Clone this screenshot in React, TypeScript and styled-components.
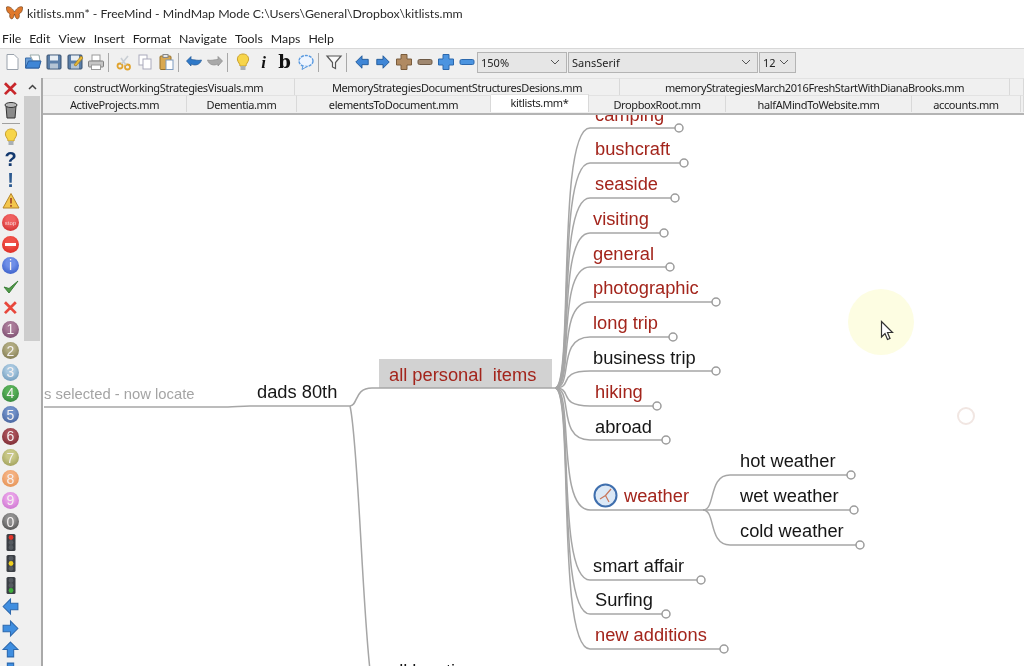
import React from "react";
import styled, { createGlobalStyle } from "styled-components";

const GlobalStyle = createGlobalStyle`
  html, body { margin: 0; padding: 0; background: #fff; }
  body { font-family: "Noto Sans", "Liberation Sans", sans-serif; }
`;

const Page = styled.div`
  width: 1024px;
  height: 666px;
  overflow: hidden;
  display: flex;
  flex-direction: column;
  background: #fff;
  filter: blur(0.4px);
`;

const TitleBar = styled.div`
  height: 26px;
  display: flex;
  align-items: center;
  gap: 4px;
  padding-left: 6px;
  font-family: Lato, "Noto Sans", sans-serif;
  font-size: 12.3px;
  color: #2a2a2a;
`;

const MenuBar = styled.div`
  height: 20px;
  margin-top: 2px;
  display: flex;
  align-items: center;
  gap: 8px;
  padding-left: 2px;
  font-family: Lato, "Noto Sans", sans-serif;
  font-size: 12.3px;
  color: #222;
`;

const ToolBar = styled.div`
  height: 30px;
  display: flex;
  align-items: center;
  padding: 0 0 3px 1px;
  box-sizing: border-box;
  background: #f0f0f0;
  border-top: 1px solid #d8d8d8;
`;

const ToolButton = styled.div`
  width: 21px;
  height: 20px;
  flex: none;
  display: flex;
  align-items: center;
  justify-content: center;
`;

const ToolSep = styled.div`
  width: 1px;
  height: 19px;
  flex: none;
  margin: 0 4px 0 2px;
  background: #a8a8a8;
`;

const Combo = styled.div<{ $w: number }>`
  width: ${(p) => p.$w}px;
  height: 21px;
  flex: none;
  box-sizing: border-box;
  margin-right: 1px;
  padding: 0 6px 0 3px;
  display: flex;
  align-items: center;
  justify-content: space-between;
  background: #e6e6e6;
  border: 1px solid #b4b4b4;
  font-size: 11px;
  color: #222;
`;

const Body = styled.div`
  flex: 1;
  min-height: 0;
  overflow: hidden;
  display: flex;
  background: #f0f0f0;
`;

const IconColumn = styled.div`
  width: 21px;
  flex: none;
  display: flex;
  flex-direction: column;
  align-items: center;
`;

const IconCell = styled.div`
  height: 21.35px;
  flex: none;
  display: flex;
  align-items: center;
  justify-content: center;
`;

const IconRule = styled.div`
  width: 18px;
  height: 1px;
  flex: none;
  margin: 2px 0 3px;
  background: #a0a0a0;
`;

const ScrollTrack = styled.div`
  width: 16px;
  flex: none;
  margin-left: 3px;
  display: flex;
  flex-direction: column;
`;

const ScrollArrow = styled.div`
  height: 18px;
  display: flex;
  align-items: center;
  justify-content: center;
  background: #f0f0f0;
`;

const ScrollThumb = styled.div`
  height: 245px;
  background: #cdcdcd;
`;

const Main = styled.div`
  flex: 1;
  min-width: 0;
  display: flex;
  flex-direction: column;
  margin-left: 1px;
  border-left: 2px solid #a9a9a9;
`;

const TabRow = styled.div`
  height: 17px;
  display: flex;
  flex: none;
`;

const Tab = styled.div<{ $w: number; $active?: boolean }>`
  width: ${(p) => p.$w}px;
  flex: none;
  box-sizing: border-box;
  display: flex;
  align-items: ${(p) => (p.$active ? "flex-start" : "center")};
  justify-content: center;
  border-right: 1px solid #d9d9d9;
  border-top: 1px solid #e2e2e2;
  background: ${(p) => (p.$active ? "#fff" : "#f0f0f0")};
  margin-top: ${(p) => (p.$active ? "-1px" : "0")};
  font-size: 11px;
  letter-spacing: -0.38px;
  color: #222;
  white-space: nowrap;
  overflow: hidden;
`;

const Canvas = styled.div`
  position: relative;
  flex: 1;
  min-height: 0;
  margin-top: 1px;
  overflow: hidden;
  background: #fff;
  border-top: 2px solid #b4b4b4;
`;

const Links = styled.svg`
  position: absolute;
  left: -43px;
  top: -115px;
  width: 1024px;
  height: 666px;
  fill: none;
`;

const NodeLabel = styled.div<{ $x: number; $y: number; $tone: string }>`
  position: absolute;
  left: ${(p) => p.$x - 43}px;
  top: ${(p) => p.$y - 115 - 11}px;
  height: 22px;
  line-height: 22px;
  font-family: "Liberation Sans", Arial, sans-serif;
  font-size: 18.3px;
  white-space: pre;
  color: ${(p) => p.$tone};
`;

const FadedLabel = styled.div`
  position: absolute;
  left: 1px;
  top: ${394 - 115 - 9}px;
  height: 18px;
  line-height: 18px;
  font-family: "Liberation Sans", Arial, sans-serif;
  font-size: 14.8px;
  color: #a4a4a4;
  white-space: pre;
`;

const SelectedBox = styled.div`
  position: absolute;
  left: ${379 - 43}px;
  top: ${359 - 115}px;
  width: 173px;
  height: 29px;
  background: #d2d2d2;
`;

const Marker = styled.div`
  position: absolute;
  left: ${848 - 43}px;
  top: ${289 - 115}px;
  width: 66px;
  height: 66px;
  border-radius: 50%;
  background: #fdfde2;
`;

const Ripple = styled.div`
  position: absolute;
  left: ${957 - 43}px;
  top: ${407 - 115}px;
  width: 18px;
  height: 18px;
  box-sizing: border-box;
  border-radius: 50%;
  border: 2px solid #f1e6e2;
`;

const PointerIcon = styled.svg`
  position: absolute;
  left: ${880 - 43}px;
  top: ${320 - 115}px;
  width: 15px;
  height: 22px;
`;

const ClockIcon = styled.svg`
  position: absolute;
  left: ${593 - 43}px;
  top: ${483 - 115}px;
  width: 25px;
  height: 25px;
`;

const Ball = styled.div<{ $c: string; $d: string }>`
  width: 17px;
  height: 17px;
  border-radius: 50%;
  display: flex;
  align-items: center;
  justify-content: center;
  background: radial-gradient(circle at 50% 35%, ${(p) => p.$c} 30%, ${(p) => p.$d} 100%);
  color: #f4f0f0;
  font-family: "Liberation Sans", Arial, sans-serif;
  font-size: 14px;
`;

const StopText = styled.span`
  font-size: 6px;
  color: #f6d0d0;
`;

const MinusBar = styled.span`
  width: 11px;
  height: 3px;
  background: #fff;
`;

const Glyph = styled.span<{ $f: string; $size: number }>`
  font-family: ${(p) => p.$f};
  font-size: ${(p) => p.$size}px;
  font-weight: 700;
  line-height: 1;
  color: #111;
`;

const LeftGlyph = styled.span<{ $c: string }>`
  font-family: "Liberation Sans", Arial, sans-serif;
  font-size: 20px;
  font-weight: 700;
  line-height: 1;
  color: ${(p) => p.$c};
`;

const Svg = ({ children, s = 18 }: { children: React.ReactNode; s?: number }) => (
  <svg width={s} height={s} viewBox="0 0 18 18">
    {children}
  </svg>
);

const Arrow = ({ rot, fill, stroke, s = 18 }: { rot: number; fill: string; stroke: string; s?: number }) => (
  <Svg s={s}>
    <path
      d="M2 9 L9 2 V6 H16 V12 H9 V16 Z"
      fill={fill}
      stroke={stroke}
      strokeWidth="1"
      transform={`rotate(${rot} 9 9)`}
    />
  </Svg>
);

const PlusIcon = ({ fill, stroke }: { fill: string; stroke: string }) => (
  <Svg>
    <path d="M6 1.5 H12 V6 H16.5 V12 H12 V16.5 H6 V12 H1.5 V6 H6 Z" fill={fill} stroke={stroke} />
  </Svg>
);

const MinusIcon = ({ fill, stroke }: { fill: string; stroke: string }) => (
  <Svg>
    <rect x="2" y="6.500" width="14" height="5" rx="1.500" fill={fill} stroke={stroke} />
  </Svg>
);

const Bulb = () => (
  <Svg>
    <path d="M9 1 C13 1 15 4 14.5 7 C14 9.500 12 10.500 12 13 H6 C6 10.500 4 9.500 3.500 7 C3 4 5 1 9 1 Z" fill="#f7d54a" stroke="#c9a02c" />
    <rect x="6.500" y="13" width="5" height="4" fill="#aab0b4" />
  </Svg>
);

const Traffic = ({ on }: { on: number }) => {
  const colors = ["#e4352a", "#f0d020", "#3fae3c"];
  return (
    <svg width="12" height="20" viewBox="0 0 12 20">
      <rect x="1.500" y="1" width="9" height="17" rx="1.500" fill="#3b3f45" />
      {colors.map((c, i) => (
        <circle key={c} cx="6" cy={4.500 + i * 5} r="2.400" fill={i === on ? c : "#555a60"} />
      ))}
    </svg>
  );
};

const Chevron = () => (
  <svg width="10" height="6" viewBox="0 0 10 6">
    <path d="M1 1 L5 5 L9 1" fill="none" stroke="#555" strokeWidth="1" />
  </svg>
);

const toolIcons: React.ReactNode[] = [
  <Svg key="new"><path d="M4 1.500 H11 L15 5.500 V16.500 H4 Z" fill="#fff" stroke="#9aa2ac" /></Svg>,
  <Svg key="open"><path d="M1.500 5 H7 L8.500 3 H15 V15 H1.500 Z" fill="#6b9fd8" stroke="#3d6ea8" /><path d="M6 2 L15 2 L16 8 L9 8 Z" fill="#fff" stroke="#9aa" /><path d="M1.500 15 L4.500 8 H17 L15 15 Z" fill="#3f86d6" stroke="#2c5f9f" /></Svg>,
  <Svg key="save"><rect x="2" y="2" width="14" height="14" rx="1" fill="#5a7ea8" stroke="#39516f" /><rect x="5" y="2.500" width="8" height="5" fill="#e8eef4" /><rect x="5" y="10.500" width="8" height="5" fill="#b4c4d4" /></Svg>,
  <Svg key="saveas"><rect x="2" y="2" width="14" height="14" rx="1" fill="#5a7ea8" stroke="#39516f" /><rect x="5" y="2.500" width="8" height="5" fill="#e8eef4" /><rect x="5" y="10.500" width="8" height="5" fill="#b4c4d4" /><path d="M8 12 L15 3 L17 5 L10 13 Z" fill="#e8b93a" stroke="#a57d1c" strokeWidth=".7" /></Svg>,
  <Svg key="print"><rect x="5" y="2" width="8" height="6" fill="#fff" stroke="#999" /><rect x="1.500" y="8" width="15" height="6" rx="1" fill="#c5c5c5" stroke="#808080" /><rect x="4.500" y="12" width="9" height="4.500" fill="#fff" stroke="#999" /></Svg>,
  "sep",
  <Svg key="cut"><circle cx="5" cy="13" r="2.500" fill="none" stroke="#e0a32e" strokeWidth="1.800" /><circle cx="12.500" cy="14" r="2.500" fill="none" stroke="#e0a32e" strokeWidth="1.800" /><path d="M6.500 11 L13 3 M11 12 L6 5" stroke="#c9ced4" strokeWidth="1.600" /></Svg>,
  <Svg key="copy"><rect x="3" y="2" width="8" height="10" fill="#fff" stroke="#aab" /><rect x="7" y="6" width="8" height="10" fill="#fff" stroke="#aab" /></Svg>,
  <Svg key="paste"><rect x="3" y="3" width="11" height="13.500" rx="1" fill="#d9a850" stroke="#96702a" /><rect x="6" y="1.500" width="5" height="3" fill="#e6e6e6" stroke="#888" /><rect x="9" y="7" width="7" height="9.500" fill="#fff" stroke="#7f9cc0" /></Svg>,
  "sep",
  <Svg key="undo"><path d="M1.500 8 L6 3.500 V6.500 C10 6.500 13 8 16.500 7 C15 12 10 13 6 11 V13 Z" fill="#2f79c8" stroke="#1f5796" strokeWidth=".7" /></Svg>,
  <Svg key="redo"><path d="M16.500 8 L12 3.500 V6.500 C8 6.500 5 8 1.500 7 C3 12 8 13 12 11 V13 Z" fill="#a9a9a9" stroke="#8a8a8a" strokeWidth=".7" /></Svg>,
  "sep",
  <Bulb key="bulb" />,
  <Glyph key="i" $f={'"Liberation Serif", serif'} $size={17}><i>i</i></Glyph>,
  <Glyph key="b" $f={'"DejaVu Serif", serif'} $size={18}>b</Glyph>,
  <Svg key="balloon"><ellipse cx="9" cy="8" rx="7" ry="5.500" fill="#eef5ff" stroke="#5a9ae0" strokeWidth="1.400" strokeDasharray="3 1" /><path d="M6 13 L5 16.500 L10 13.500" fill="#eef5ff" stroke="#5a9ae0" /></Svg>,
  "sep",
  <Svg key="filter"><path d="M2 3 H16 L10.500 9.500 V15.500 L7.500 14 V9.500 Z" fill="#fafafa" stroke="#555" strokeWidth="1.200" /></Svg>,
  "sep",
  <Arrow key="l" rot={0} fill="#3f86d6" stroke="#1f5796" s={16} />,
  <Arrow key="r" rot={180} fill="#3f86d6" stroke="#1f5796" s={16} />,
  <PlusIcon key="p1" fill="#b08a62" stroke="#7a5c3c" />,
  <MinusIcon key="m1" fill="#a08870" stroke="#6e5a46" />,
  <PlusIcon key="p2" fill="#4b94e0" stroke="#2c68ad" />,
  <MinusIcon key="m2" fill="#4b94e0" stroke="#2c68ad" />,
];

const columnIcons: React.ReactNode[] = [
  <LeftGlyph key="x" $c="#c8262a">✕</LeftGlyph>,
  <Svg key="trash">
    <path d="M4 5 H14 L13 17 H5 Z" fill="#8a8a8a" stroke="#333" />
    <ellipse cx="9" cy="4" rx="6" ry="2.500" fill="#b8b8b8" stroke="#333" />
  </Svg>,
  "rule",
  <Bulb key="bulb" />,
  <LeftGlyph key="q" $c="#12386e">?</LeftGlyph>,
  <LeftGlyph key="e" $c="#2c5a90">!</LeftGlyph>,
  <Svg key="warn">
    <path d="M9 1.500 L17 16 H1 Z" fill="#f4c64c" stroke="#b5862a" />
    <path d="M9 6 V11.500 M9 13 V14.800" stroke="#a8502a" strokeWidth="1.800" />
  </Svg>,
  <Ball key="stop" $c="#f06060" $d="#c82020"><StopText>stop</StopText></Ball>,
  <Ball key="minus" $c="#f05048" $d="#d82018"><MinusBar /></Ball>,
  <Ball key="info" $c="#6f8fe8" $d="#2a50c0">i</Ball>,
  <Svg key="ok"><path d="M2 9 L7 15 L16 3 L7 10.500 Z" fill="#4f9a48" stroke="#3b7f38" /></Svg>,
  <LeftGlyph key="no" $c="#e8473c">✕</LeftGlyph>,
];

const numberBalls: [string, string][] = [
  ["#a87a98", "#6e3f62"],
  ["#b0aa80", "#746c44"],
  ["#a8c8e0", "#5f8db0"],
  ["#58b058", "#2a7a34"],
  ["#7090c8", "#3a5590"],
  ["#a85058", "#6e2028"],
  ["#c8c888", "#94944c"],
  ["#f4b080", "#e08a48"],
  ["#e8a0e8", "#c468c8"],
  ["#909090", "#3c3c3c"],
];

const topRow = [
  ["constructWorkingStrategiesVisuals.mm", 252],
  ["MemoryStrategiesDocumentStructuresDesions.mm", 325],
  ["memoryStrategiesMarch2016FreshStartWithDianaBrooks.mm", 390],
  ["", 14],
] as const;

const bottomRow = [
  ["ActiveProjects.mm", 144],
  ["Dementia.mm", 110],
  ["elementsToDocument.mm", 194],
  ["kitlists.mm*", 98],
  ["DropboxRoot.mm", 137],
  ["halfAMindToWebsite.mm", 186],
  ["accounts.mm", 109],
  ["", 3],
] as const;

const RED = "#a3251c";
const INK = "#161616";

// text x, text y, line y, circle x
const branches: [string, number, number, number, number, string][] = [
  ["camping", 595, 115, 128, 679, RED],
  ["bushcraft", 595, 149, 163, 684, RED],
  ["seaside", 595, 184, 198, 675, RED],
  ["visiting", 593, 219, 233, 664, RED],
  ["general", 593, 254, 267, 670, RED],
  ["photographic", 593, 288, 302, 716, RED],
  ["long trip", 593, 323, 337, 673, RED],
  ["business trip", 593, 358, 371, 716, INK],
  ["hiking", 595, 392, 406, 657, RED],
  ["abroad", 595, 427, 440, 666, INK],
  ["weather", 624, 496, 510, 707, RED],
  ["smart affair", 593, 566, 580, 701, INK],
  ["Surfing", 595, 600, 614, 666, INK],
  ["new additions", 595, 635, 649, 724, RED],
];

const weatherKids: [string, number, number, number, number, string][] = [
  ["hot weather", 740, 461, 475, 851, INK],
  ["wet weather", 740, 496, 510, 854, INK],
  ["cold weather", 740, 531, 545, 860, INK],
];

const Stroke = "#a6a6a6";

const App = () => (
  <>
    <GlobalStyle />
    <Page>
      <TitleBar>
        <svg width="17" height="15" viewBox="0 0 17 15">
          <path d="M8.500 6 C6 1 2 0 .5 1 C0 5 2 7 4 8 C3 10 4 13 6 13 C7.500 12 8 10 8.500 8 C9 10 9.500 12 11 13 C13 13 14 10 13 8 C15 7 17 5 16.500 1 C15 0 11 1 8.500 6 Z" fill="#e0792c" stroke="#6a3a14" strokeWidth=".6" />
        </svg>
        <span>kitlists.mm* - FreeMind - MindMap Mode C:\Users\General\Dropbox\kitlists.mm</span>
      </TitleBar>
      <MenuBar>
        {["File", "Edit", "View", "Insert", "Format", "Navigate", "Tools", "Maps", "Help"].map((m) => (
          <span key={m}>{m}</span>
        ))}
      </MenuBar>
      <ToolBar>
        {toolIcons.map((icon, i) =>
          icon === "sep" ? <ToolSep key={i} /> : <ToolButton key={i}>{icon}</ToolButton>
        )}
        <Combo $w={90}>150%<Chevron /></Combo>
        <Combo $w={190}>SansSerif<Chevron /></Combo>
        <Combo $w={37}>12<Chevron /></Combo>
      </ToolBar>
      <Body>
        <IconColumn>
          {columnIcons.map((icon, i) =>
            icon === "rule" ? <IconRule key={i} /> : <IconCell key={i}>{icon}</IconCell>
          )}
          {numberBalls.map(([c, d], i) => (
            <IconCell key={c}>
              <Ball $c={c} $d={d}>{(i + 1) % 10}</Ball>
            </IconCell>
          ))}
          <IconCell><Traffic on={0} /></IconCell>
          <IconCell><Traffic on={1} /></IconCell>
          <IconCell><Traffic on={2} /></IconCell>
          <IconCell><Arrow rot={0} fill="#3f8ee0" stroke="#2c68ad" s={19} /></IconCell>
          <IconCell><Arrow rot={180} fill="#3f8ee0" stroke="#2c68ad" s={19} /></IconCell>
          <IconCell><Arrow rot={90} fill="#3f8ee0" stroke="#2c68ad" s={19} /></IconCell>
          <IconCell><Arrow rot={270} fill="#3f8ee0" stroke="#2c68ad" s={19} /></IconCell>
        </IconColumn>
        <ScrollTrack>
          <ScrollArrow>
            <svg width="9" height="6" viewBox="0 0 9 6">
              <path d="M1 5 L4.500 1.500 L8 5" fill="none" stroke="#444" strokeWidth="1.500" />
            </svg>
          </ScrollArrow>
          <ScrollThumb />
        </ScrollTrack>
        <Main>
          <TabRow>
            {topRow.map(([label, w]) => (
              <Tab key={label + w} $w={w}>{label}</Tab>
            ))}
          </TabRow>
          <TabRow>
            {bottomRow.map(([label, w]) => (
              <Tab key={label + w} $w={w} $active={label === "kitlists.mm*"}>{label}</Tab>
            ))}
          </TabRow>
          <Canvas>
            <SelectedBox />
            <Marker />
            <Ripple />
            <Links viewBox="0 0 1024 666">
              <g stroke={Stroke} strokeWidth="1.500">
                <path d="M44 407 H228 C236 407 240 406 250 406 H350" />
                <path d="M350 406 C358 406 354 388 372 388 H555" />
                <path d="M350 406 C358 440 362 600 370 670" />
                {branches.map(([label, , , ly, cx]) => (
                  <path key={label} d={`M555 388 C574 388, 556 ${ly}, 590 ${ly} H${cx - 4}`} />
                ))}
                <path d="M703 510 C716 510 708 475 730 475 H847" />
                <path d="M703 510 H850" />
                <path d="M703 510 C716 510 708 545 730 545 H856" />
              </g>
              <g stroke="#9c9c9c" strokeWidth="1.500" fill="#fff">
                {[...branches, ...weatherKids]
                  .filter(([label]) => label !== "weather")
                  .map(([label, , , ly, cx]) => (
                    <circle key={label} cx={cx} cy={ly} r="4" />
                  ))}
              </g>
            </Links>
            {[...branches, ...weatherKids].map(([label, x, y, , , tone]) => (
              <NodeLabel key={label} $x={x} $y={y} $tone={tone}>{label}</NodeLabel>
            ))}
            <NodeLabel $x={389} $y={375} $tone={RED}>all personal  items</NodeLabel>
            <NodeLabel $x={257} $y={392} $tone={INK}>dads 80th</NodeLabel>
            <NodeLabel $x={389} $y={671} $tone={INK}>all locations</NodeLabel>
            <FadedLabel>s selected - now locate</FadedLabel>
            <ClockIcon viewBox="0 0 25 25">
              <circle cx="12.500" cy="12.500" r="11" fill="#dbe8f6" stroke="#3f6fae" strokeWidth="2" />
              <path d="M12.500 12.500 L18 6 M12.500 12.500 L7 16 M12.500 12.500 L16 19" stroke="#c8765a" strokeWidth="1.200" />
            </ClockIcon>
            <PointerIcon viewBox="0 0 15 22">
              <path d="M1.500 1.500 V17 L5 13.500 L7.500 19.500 L10 18.500 L7.500 12.500 H12.500 Z" fill="#fff" stroke="#333" strokeWidth="1.200" />
            </PointerIcon>
          </Canvas>
        </Main>
      </Body>
    </Page>
  </>
);

export default App;
